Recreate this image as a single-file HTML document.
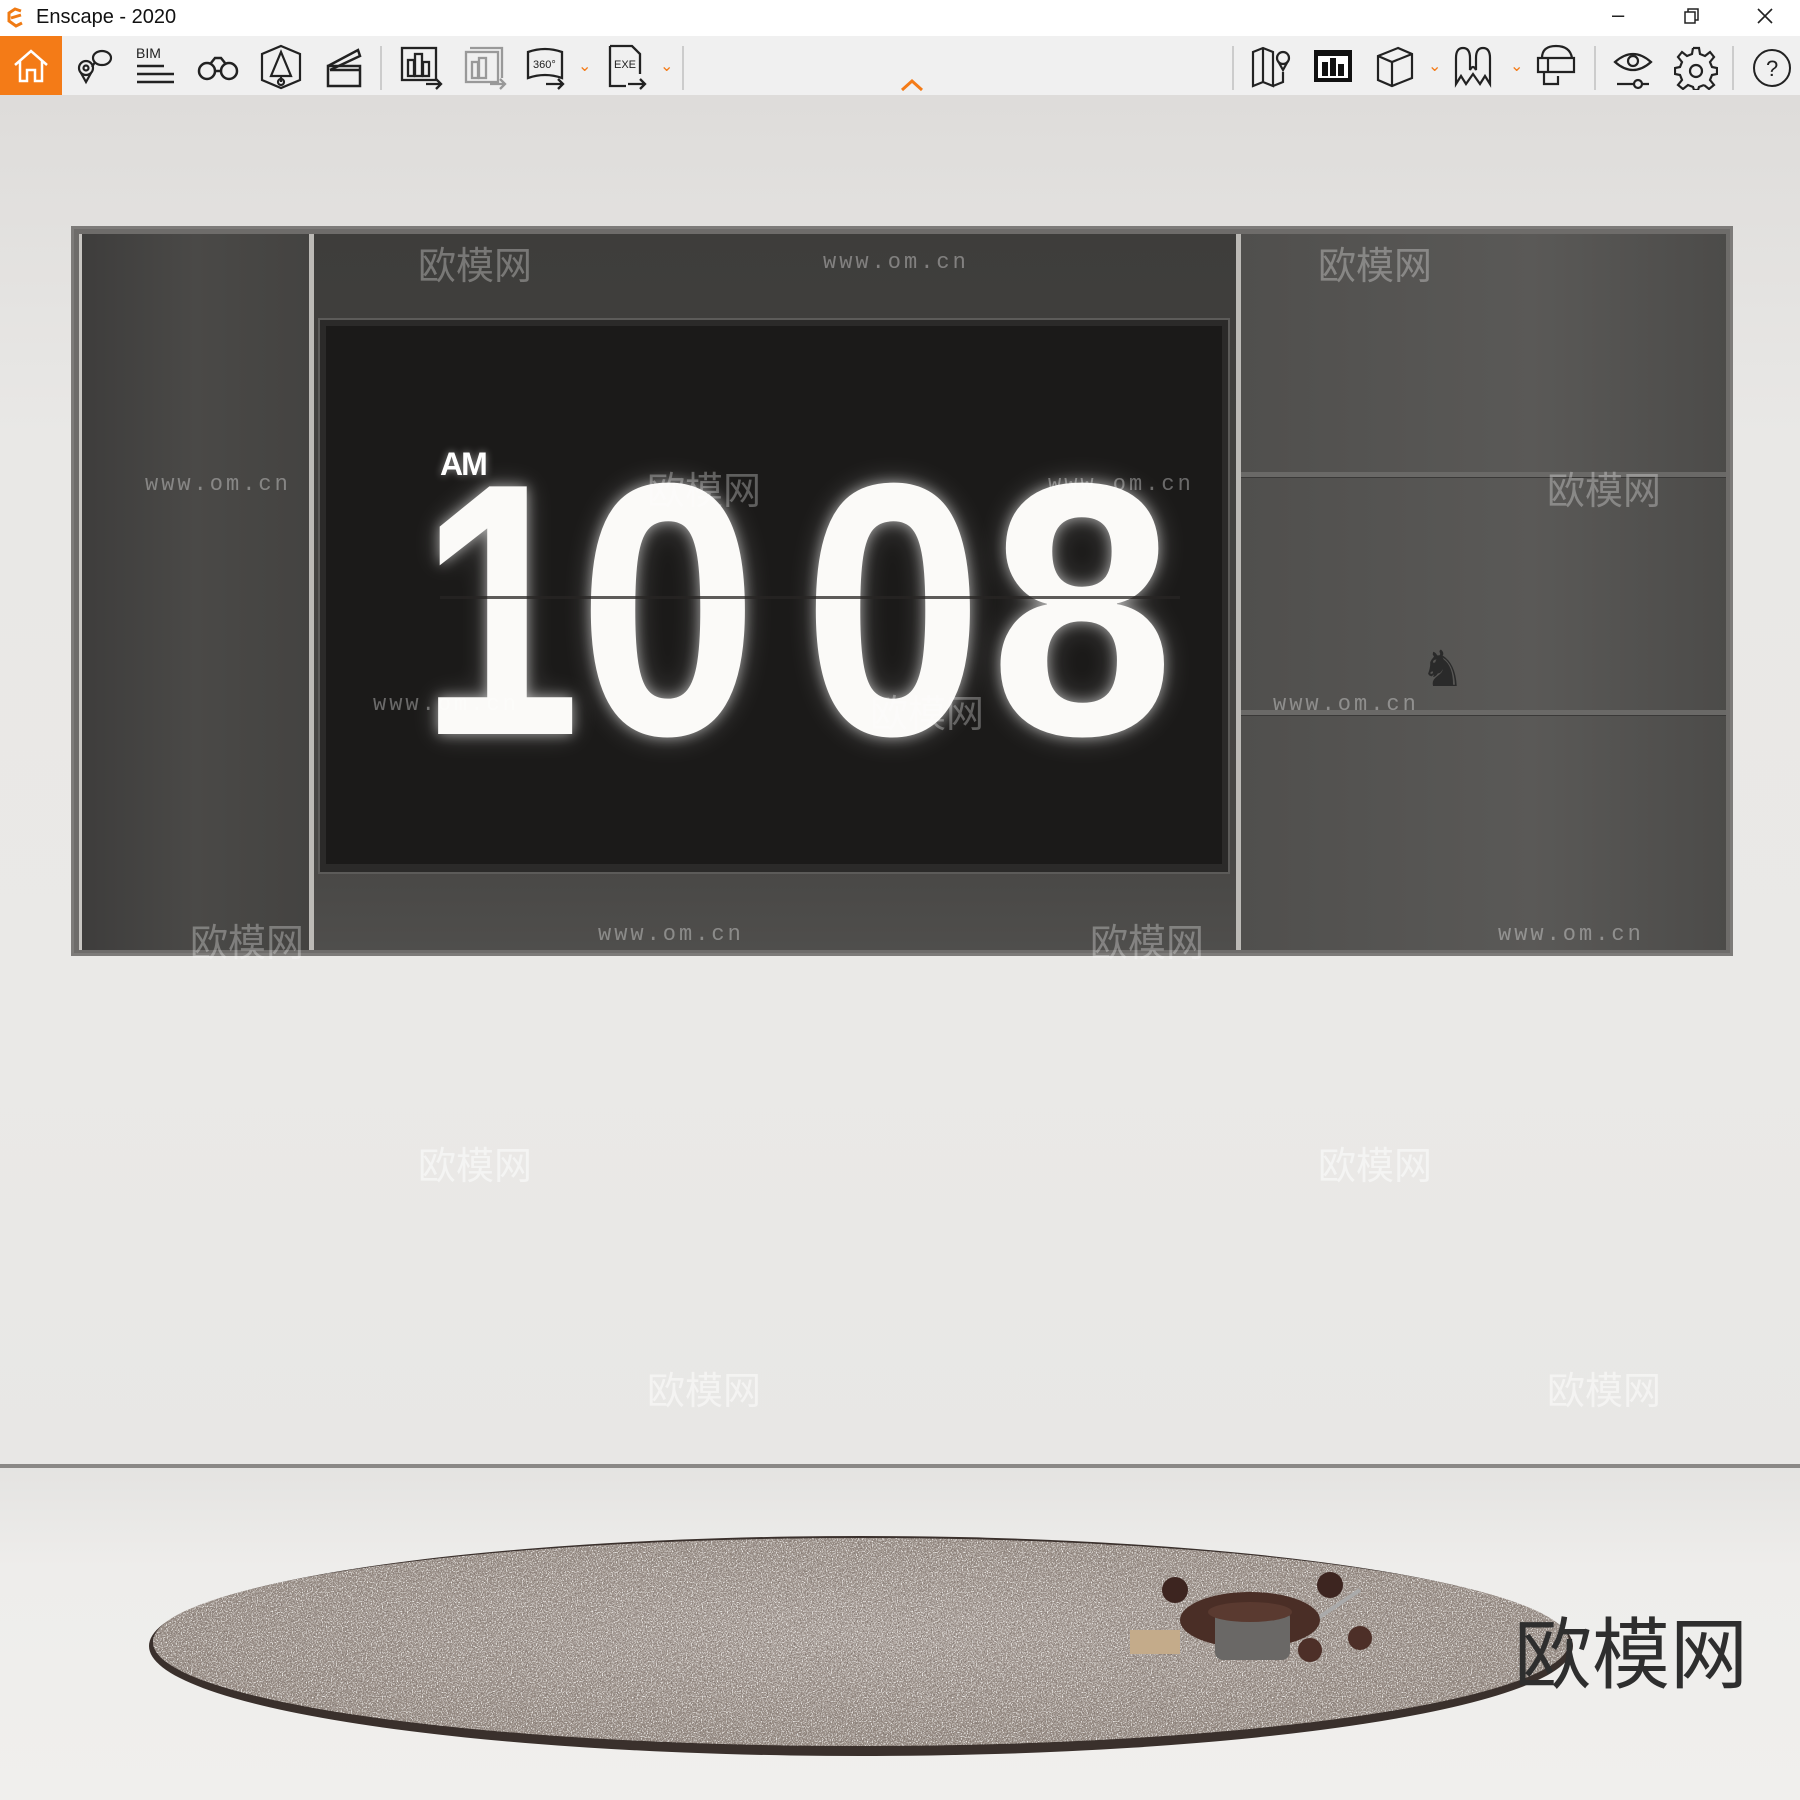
<!DOCTYPE html>
<html><head><meta charset="utf-8">
<style>
*{margin:0;padding:0;box-sizing:border-box}
body{width:1800px;height:1800px;position:relative;overflow:hidden;background:#e9e8e6;font-family:"Liberation Sans","Noto Sans CJK SC",sans-serif}
.abs{position:absolute}
#title{left:0;top:0;width:1800px;height:36px;background:#fff}
#tb{left:0;top:36px;width:1800px;height:59px;background:#f0f0f0}
#wall{left:0;top:95px;width:1800px;height:1371px;background:linear-gradient(#dedcda,#e9e8e6 25%,#eae9e7 70%,#e8e7e5)}
#floor{left:0;top:1466px;width:1800px;height:334px;background:linear-gradient(#e4e3e1,#eeedeb 30%,#f0efed)}
#fline{left:0;top:1464px;width:1800px;height:4px;background:#8a8886}
.ic{position:absolute;top:44px}
.ic svg{display:block}
.dig{position:absolute;top:430px;height:360px;font-size:360px;line-height:1;font-weight:bold;font-family:"Liberation Sans",sans-serif;color:#fbfaf8;text-align:center;text-shadow:0 0 14px rgba(255,255,255,.55),0 0 30px rgba(255,255,255,.25)}
.wm{position:absolute;color:rgba(255,255,255,.35);font-size:22px;letter-spacing:3px;font-family:"Liberation Mono",monospace}
.wc{position:absolute;color:rgba(255,255,255,.3);font-size:38px;font-family:"Noto Sans CJK SC",sans-serif}
</style></head><body>
<div id="title" class="abs">
<svg class="abs" style="left:6px;top:7px" width="20" height="22" viewBox="0 0 20 22"><path d="M15 4 L9 2 L3 6 L3 14 L10 19 L16 16 M5 11 L15 8" fill="none" stroke="#f07b14" stroke-width="3"/></svg>
<div class="abs" style="left:36px;top:6px;font-size:20px;color:#111">Enscape - 2020</div>
<div class="abs" style="left:1612px;top:2px;font-size:22px;color:#222">–</div>
<svg class="abs" style="left:1684px;top:8px" width="16" height="16"><rect x="1" y="4" width="10" height="11" fill="none" stroke="#222" stroke-width="1.5"/><path d="M4 4 V1 H14 V12 H11" fill="none" stroke="#222" stroke-width="1.5"/></svg>
<svg class="abs" style="left:1756px;top:7px" width="18" height="18"><path d="M2 2 L16 16 M16 2 L2 16" stroke="#222" stroke-width="1.6"/></svg>
</div>
<div id="tb" class="abs"></div>
<div class="abs" style="left:0;top:36px;width:62px;height:59px;background:#f47b17"></div>
<svg class="abs" style="left:12px;top:48px" width="38" height="36" viewBox="0 0 38 36"><path d="M3 17 L19 3 L35 17 M8 13 V33 H15 V22 H23 V33 H30 V13" fill="none" stroke="#fff" stroke-width="2.5"/></svg>
<svg class="ic" style="left:72px" width="42" height="44" viewBox="0 0 42 44" fill="none" stroke="#222" stroke-width="2.2"><circle cx="14" cy="24" r="7"/><circle cx="14" cy="24" r="2.5"/><path d="M9 29 L14 38 L19 29"/><ellipse cx="30" cy="14" rx="9" ry="7"/><path d="M23 18 L20 23"/></svg>
<div class="abs" style="left:136px;top:45px;font-size:14px;color:#222">BIM</div>
<svg class="ic" style="left:134px" width="42" height="44"><path d="M3 22 H30 M3 30 H40 M3 38 H40" stroke="#222" stroke-width="2.5"/></svg>
<svg class="ic" style="left:196px" width="44" height="44" fill="none" stroke="#222" stroke-width="2.5"><circle cx="11" cy="27" r="8"/><circle cx="33" cy="27" r="8"/><path d="M15 19 L19 14 H25 L29 19 M19 27 H25"/></svg>
<svg class="ic" style="left:258px" width="46" height="46" fill="none" stroke="#222" stroke-width="2.2"><path d="M23 2 L42 10 V36 L23 44 L4 36 V10 Z"/><path d="M23 8 L13 32 H33 Z M23 32 V38"/><circle cx="23" cy="38" r="3"/></svg>
<svg class="ic" style="left:322px" width="44" height="46" fill="none" stroke="#222" stroke-width="2.5"><rect x="6" y="22" width="32" height="20"/><path d="M6 22 L36 6 L38 12 L8 26"/><path d="M8 26 H38"/></svg>
<div class="abs" style="left:380px;top:46px;width:2px;height:44px;background:#ccc"></div>
<svg class="ic" style="left:398px" width="46" height="46" fill="none" stroke="#222" stroke-width="2.3"><rect x="4" y="4" width="34" height="32"/><rect x="10" y="16" width="6" height="16"/><rect x="17" y="10" width="7" height="22"/><rect x="25" y="18" width="6" height="14"/><path d="M28 40 H42 M38 35 L43 40 L38 45"/></svg>
<svg class="ic" style="left:462px" width="46" height="46" fill="none" stroke="#999" stroke-width="2.3"><rect x="4" y="8" width="32" height="30"/><path d="M8 4 H40 V34"/><rect x="10" y="18" width="6" height="16"/><rect x="17" y="14" width="7" height="20"/><path d="M28 40 H42 M38 35 L43 40 L38 45"/></svg>
<svg class="ic" style="left:524px" width="46" height="46" fill="none" stroke="#222" stroke-width="2.3"><path d="M4 8 Q21 2 38 8 V34 Q21 28 4 34 Z"/><text x="9" y="24" font-size="11" fill="#222" stroke="none" font-family="Liberation Sans">360°</text><path d="M22 40 H38 M34 35 L39 40 L34 45"/></svg>
<div class="abs" style="left:578px;top:56px;color:#f47b17;font-size:16px">⌄</div>
<svg class="ic" style="left:606px" width="46" height="46" fill="none" stroke="#222" stroke-width="2.3"><path d="M4 2 H26 L34 10 V30 M4 2 V42 H20"/><text x="8" y="24" font-size="11" fill="#222" stroke="none" font-family="Liberation Sans">EXE</text><path d="M22 40 H38 M34 35 L39 40 L34 45"/></svg>
<div class="abs" style="left:660px;top:56px;color:#f47b17;font-size:16px">⌄</div>
<div class="abs" style="left:682px;top:46px;width:2px;height:44px;background:#ccc"></div>
<svg class="abs" style="left:900px;top:78px" width="24" height="14"><path d="M2 12 L12 3 L22 12" fill="none" stroke="#f47b17" stroke-width="3"/></svg>
<div class="abs" style="left:1232px;top:46px;width:2px;height:44px;background:#ccc"></div>
<svg class="ic" style="left:1250px" width="42" height="46" fill="none" stroke="#222" stroke-width="2.2"><path d="M3 8 L13 4 L23 8 V42 L13 38 L3 42 Z M13 4 V38 M23 42 L33 38 V28"/><circle cx="33" cy="14" r="6"/><path d="M28 17 L33 26 L38 17"/></svg>
<svg class="ic" style="left:1312px" width="42" height="46"><rect x="2" y="6" width="38" height="32" fill="#111"/><rect x="6" y="12" width="30" height="22" fill="#fff"/><rect x="10" y="18" width="6" height="14" fill="#111"/><rect x="18" y="14" width="6" height="18" fill="#111"/><rect x="26" y="20" width="6" height="12" fill="#111"/></svg>
<svg class="ic" style="left:1374px" width="42" height="46" fill="none" stroke="#222" stroke-width="2.2"><path d="M4 12 L24 4 L38 10 V34 L18 42 L4 36 Z M4 12 L18 18 L38 10 M18 18 V42"/></svg>
<div class="abs" style="left:1428px;top:56px;color:#f47b17;font-size:16px">⌄</div>
<svg class="ic" style="left:1452px" width="42" height="46" fill="none" stroke="#222" stroke-width="2.2"><path d="M4 40 V14 Q4 4 11 4 Q18 4 18 14 V26 Q21 20 24 26 V14 Q24 4 31 4 Q38 4 38 14 V40 L33 32 L28 40 L21 30 L14 40 L9 32 Z"/></svg>
<div class="abs" style="left:1510px;top:56px;color:#f47b17;font-size:16px">⌄</div>
<svg class="ic" style="left:1534px" width="46" height="46" fill="none" stroke="#222" stroke-width="2.2"><path d="M8 14 Q8 2 22 2 Q36 2 38 14 M4 14 H40 V28 H4 Z M14 14 V28 M10 28 V40 H24 V32"/></svg>
<div class="abs" style="left:1594px;top:46px;width:2px;height:44px;background:#ccc"></div>
<svg class="ic" style="left:1612px" width="42" height="46" fill="none" stroke="#222" stroke-width="2.2"><path d="M3 18 Q21 2 39 18 Q21 34 3 18 Z"/><circle cx="21" cy="17" r="5"/><path d="M5 40 H37"/><circle cx="26" cy="40" r="4" fill="#f0f0f0"/></svg>
<svg class="ic" style="left:1674px" width="44" height="46" fill="none" stroke="#222" stroke-width="2.2"><path d="M19 4 H25 L26 10 L31 12 L36 8 L40 13 L36 18 L38 23 L43 24 V30 L38 31 L36 36 L40 41 L35 45 L30 41"/><path d="M19 4 L18 10 L13 12 L8 8 L4 13 L8 18 L6 23 L1 24 V30 L6 31 L8 36 L4 41 L9 45 L14 41 L19 43 L20 46 H24 L25 43 L30 41"/><circle cx="22" cy="27" r="6"/></svg>
<div class="abs" style="left:1732px;top:46px;width:2px;height:44px;background:#ccc"></div>
<svg class="ic" style="left:1750px" width="44" height="46" fill="none" stroke="#222" stroke-width="2"><circle cx="22" cy="24" r="18"/><text x="16" y="32" font-size="22" fill="#222" stroke="none" font-family="Liberation Sans">?</text></svg>

<div id="wall" class="abs"></div>
<div id="floor" class="abs"></div>
<div id="fline" class="abs"></div>

<!-- cabinet -->
<div class="abs" style="left:71px;top:226px;width:1662px;height:730px;background:#6e6c6a;border:3px solid #7d7b79"></div>
<div class="abs" style="left:79px;top:234px;width:230px;height:716px;background:linear-gradient(90deg,#3e3d3c,#4a4947 50%,#444341);border-left:3px solid #c8c6c2"></div>
<div class="abs" style="left:309px;top:234px;width:5px;height:716px;background:#bcbab6"></div>
<div class="abs" style="left:314px;top:234px;width:922px;height:716px;background:linear-gradient(#3e3d3b,#474644 85%,#4f4e4c)"></div>
<div class="abs" style="left:1236px;top:234px;width:5px;height:716px;background:#bcbab6"></div>
<div class="abs" style="left:1241px;top:234px;width:485px;height:716px;background:linear-gradient(90deg,#504f4d,#5a5957 60%,#4c4b49)"></div>
<div class="abs" style="left:1241px;top:472px;width:485px;height:6px;background:#6a6967;border-bottom:1px solid #3a3938"></div>
<div class="abs" style="left:1241px;top:710px;width:485px;height:6px;background:#6a6967;border-bottom:1px solid #3a3938"></div>
<div class="abs" style="left:1420px;top:640px;width:70px;height:68px;font-size:50px;color:#2a2a2a">♞</div>
<!-- TV -->
<div class="abs" style="left:318px;top:318px;width:912px;height:556px;background:#2b2a29;border:2px solid #5c5b59"></div>
<div class="abs" style="left:326px;top:326px;width:896px;height:538px;background:#1b1a19"></div>
<div class="abs" style="left:440px;top:446px;font-size:32px;font-weight:bold;color:#fff;letter-spacing:-2px;text-shadow:0 0 8px rgba(255,255,255,.5)">AM</div>
<div class="dig" style="left:400px;width:200px;transform:scaleX(.8)">1</div>
<div class="dig" style="left:568px;width:200px;transform:scaleX(.9)">0</div>
<div class="dig" style="left:793px;width:200px;transform:scaleX(.9)">0</div>
<div class="dig" style="left:982px;width:200px;transform:scaleX(.92)">8</div>
<div class="abs" style="left:440px;top:596px;width:740px;height:3px;background:rgba(40,38,36,.75)"></div>

<!-- watermarks -->
<div class="wm" style="left:145px;top:472px">www.om.cn</div>
<div class="wm" style="left:823px;top:250px">www.om.cn</div>
<div class="wm" style="left:1048px;top:472px">www.om.cn</div>
<div class="wm" style="left:373px;top:692px">www.om.cn</div>
<div class="wm" style="left:1273px;top:692px">www.om.cn</div>
<div class="wm" style="left:598px;top:922px">www.om.cn</div>
<div class="wm" style="left:1498px;top:922px">www.om.cn</div>
<div class="wc" style="left:418px;top:235px">欧模网</div>
<div class="wc" style="left:1318px;top:235px">欧模网</div>
<div class="wc" style="left:647px;top:460px">欧模网</div>
<div class="wc" style="left:870px;top:683px">欧模网</div>
<div class="wc" style="left:1547px;top:460px">欧模网</div>
<div class="wc" style="left:190px;top:912px">欧模网</div>
<div class="wc" style="left:1090px;top:912px">欧模网</div>
<div class="wc" style="left:418px;top:1135px;color:rgba(255,255,255,.5)">欧模网</div>
<div class="wc" style="left:1318px;top:1135px;color:rgba(255,255,255,.5)">欧模网</div>
<div class="wc" style="left:647px;top:1360px;color:rgba(255,255,255,.5)">欧模网</div>
<div class="wc" style="left:1547px;top:1360px;color:rgba(255,255,255,.5)">欧模网</div>

<!-- rug -->
<svg class="abs" style="left:0;top:1500px" width="1800" height="300">
<defs>
<filter id="n" x="0" y="0" width="100%" height="100%"><feTurbulence type="fractalNoise" baseFrequency="0.7" numOctaves="2" seed="3"/><feColorMatrix values="0 0 0 0 0.22  0 0 0 0 0.18  0 0 0 0 0.16  4 0 0 0 -1.9"/><feComposite in2="SourceGraphic" operator="in"/></filter>
<filter id="n2" x="0" y="0" width="100%" height="100%"><feTurbulence type="fractalNoise" baseFrequency="0.8" numOctaves="2" seed="9"/><feColorMatrix values="0 0 0 0 0.93  0 0 0 0 0.92  0 0 0 0 0.9  4 0 0 0 -2.0"/><feComposite in2="SourceGraphic" operator="in"/></filter>
<radialGradient id="rg" cx="50%" cy="45%" r="60%"><stop offset="0" stop-color="#aaa09a"/><stop offset="1" stop-color="#948981"/></radialGradient>
</defs>
<ellipse cx="861" cy="146" rx="712" ry="110" fill="#3a302c"/>
<ellipse cx="861" cy="142" rx="708" ry="104" fill="url(#rg)"/>
<ellipse cx="861" cy="142" rx="708" ry="104" fill="#000" filter="url(#n)"/>
<ellipse cx="861" cy="142" rx="708" ry="104" fill="#000" filter="url(#n2)"/>
<path d="M1300 130 L1360 90" stroke="#aaa" stroke-width="4"/>
<ellipse cx="1250" cy="120" rx="70" ry="28" fill="#4a2e26"/>
<rect x="1215" y="110" width="75" height="50" rx="8" fill="#6a6866"/>
<ellipse cx="1250" cy="112" rx="42" ry="10" fill="#5a3a30"/>
<circle cx="1175" cy="90" r="13" fill="#3d2520"/><circle cx="1330" cy="85" r="13" fill="#3d2520"/>
<circle cx="1310" cy="150" r="12" fill="#4d2f28"/><circle cx="1360" cy="138" r="12" fill="#4d2f28"/>
<rect x="1130" y="130" width="50" height="24" fill="#c4ab8a"/>
</svg>
<div class="abs" style="left:1514px;top:1610px;font-size:78px;color:#2e2e2e;font-family:'Noto Sans CJK SC',sans-serif;line-height:1">欧模网</div>
</body></html>
